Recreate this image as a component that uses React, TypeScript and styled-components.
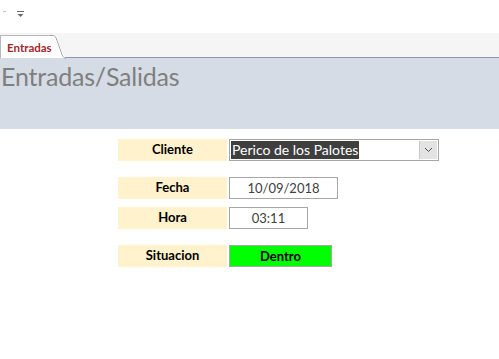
import React from 'react';
import styled, { createGlobalStyle } from 'styled-components';

const GlobalStyle = createGlobalStyle`
    html, body {
        margin: 0;
        padding: 0;
        background: #ffffff;
        font-family: Lato, "Open Sans", sans-serif;
    }
`;

const Page = styled.div`
    width: 499px;
    height: 359px;
    display: flex;
    flex-direction: column;
    background: #ffffff;
    overflow: hidden;
`;

const QuickBar = styled.div`
    height: 33px;
    display: flex;
    align-items: flex-start;
    gap: 10px;
    padding: 10px 0 0 3px;
    box-sizing: border-box;
`;

const TabStrip = styled.div`
    height: 24px;
    background: #f5f5f5;
    border-bottom: 1px solid #8b98a5;
    display: flex;
    align-items: flex-end;
`;

const Tab = styled.div`
    position: relative;
    height: 23px;
    width: 53px;
    background: #ffffff;
    border-top: 1px solid #b8b8b8;
    border-left: 1px solid #b8b8b8;
    box-sizing: border-box;
    font-family: Lato, sans-serif;
    font-weight: 700;
    font-size: 11.5px;
    color: #a4262c;
    padding: 5px 0 0 6px;
    margin-bottom: -1px;
    white-space: nowrap;
`;

const TabCurve = styled.svg`
    position: absolute;
    right: -13px;
    top: -1px;
    z-index: 0;
`;

const TabText = styled.span`
    position: relative;
    z-index: 1;
`;

const Header = styled.div`
    height: 71px;
    background: #d6dce5;
    display: flex;
    align-items: flex-start;
`;

const Title = styled.h1`
    margin: 3px 0 0 1px;
    font-family: Lato, sans-serif;
    font-weight: 400;
    font-size: 25px;
    color: #7f7f7f;
    letter-spacing: -0.2px;
`;

const Form = styled.div`
    display: flex;
    flex-direction: column;
    padding: 10px 0 0 118px;
`;

const Row = styled.div<{ $gap: number }>`
    display: flex;
    gap: 2px;
    height: 22px;
    margin-bottom: ${(p) => p.$gap}px;
`;

const Label = styled.div`
    width: 109px;
    background: #fff2cc;
    display: flex;
    align-items: center;
    justify-content: center;
    font-family: Lato, sans-serif;
    font-weight: 700;
    font-size: 13px;
    color: #000000;
    padding-bottom: 3px;
    box-sizing: border-box;
`;

const Field = styled.div<{ $w: number; $bg?: string; $bold?: boolean }>`
    width: ${(p) => p.$w}px;
    box-sizing: border-box;
    border: 1px solid #a6a6a6;
    background: ${(p) => p.$bg || '#ffffff'};
    display: flex;
    align-items: center;
    justify-content: center;
    font-family: Lato, sans-serif;
    font-size: 13px;
    font-weight: ${(p) => (p.$bold ? 700 : 400)};
    color: ${(p) => (p.$bold ? '#000000' : '#404040')};
`;

const Combo = styled.div`
    width: 210px;
    box-sizing: border-box;
    border: 1px solid #a6a6a6;
    background: #ffffff;
    display: flex;
    align-items: stretch;
    padding: 1px;
`;

const Selected = styled.span`
    background: #3f3f3f;
    color: #ffffff;
    font-family: Lato, sans-serif;
    font-size: 14px;
    line-height: 18px;
    padding: 0 1px;
    align-self: center;
`;

const Spacer = styled.div`
    flex: 1;
`;

const DropButton = styled.div`
    width: 17px;
    background: #e3e3e3;
    border-left: 1px solid #c8c8c8;
    display: flex;
    align-items: center;
    justify-content: center;
`;

const App = () => {
    return (
        <Page>
            <GlobalStyle />
            <QuickBar>
                <svg width="4" height="4" viewBox="0 0 4 4">
                    <rect x="0" y="1" width="3" height="1" fill="#c0c0c0" />
                </svg>
                <svg width="7" height="8" viewBox="0 0 7 8">
                    <rect x="0" y="1" width="7" height="1" fill="#6a6a6a" />
                    <path d="M0.5 4 L6.5 4 L3.5 7 Z" fill="#6a6a6a" />
                </svg>
            </QuickBar>
            <TabStrip>
                <Tab>
                    <TabCurve width="16" height="24" viewBox="0 0 16 24">
                        <path d="M0 0.5 L2 0.5 Q5 0.5 6 3 L12 20 Q13 23 16 23.5" fill="#ffffff" stroke="#9a9a9a" strokeWidth="1" />
                        <path d="M0 1 L2 1 Q5 1 5.6 3 L11.6 20 Q12.6 23 16 23 L0 23 Z" fill="#ffffff" />
                    </TabCurve>
                    <TabText>Entradas</TabText>
                </Tab>
            </TabStrip>
            <Header>
                <Title>Entradas/Salidas</Title>
            </Header>
            <Form>
                <Row $gap={16}>
                    <Label>Cliente</Label>
                    <Combo>
                        <Selected>Perico de los Palotes</Selected>
                        <Spacer />
                        <DropButton>
                            <svg width="9" height="6" viewBox="0 0 9 6">
                                <path d="M1 1 L4.5 4.5 L8 1" fill="none" stroke="#555555" strokeWidth="1" />
                            </svg>
                        </DropButton>
                    </Combo>
                </Row>
                <Row $gap={8}>
                    <Label>Fecha</Label>
                    <Field $w={109}>10/09/2018</Field>
                </Row>
                <Row $gap={16}>
                    <Label>Hora</Label>
                    <Field $w={79}>03:11</Field>
                </Row>
                <Row $gap={0}>
                    <Label>Situacion</Label>
                    <Field $w={103} $bg="#00ff00" $bold>Dentro</Field>
                </Row>
            </Form>
        </Page>
    );
};

export default App;
